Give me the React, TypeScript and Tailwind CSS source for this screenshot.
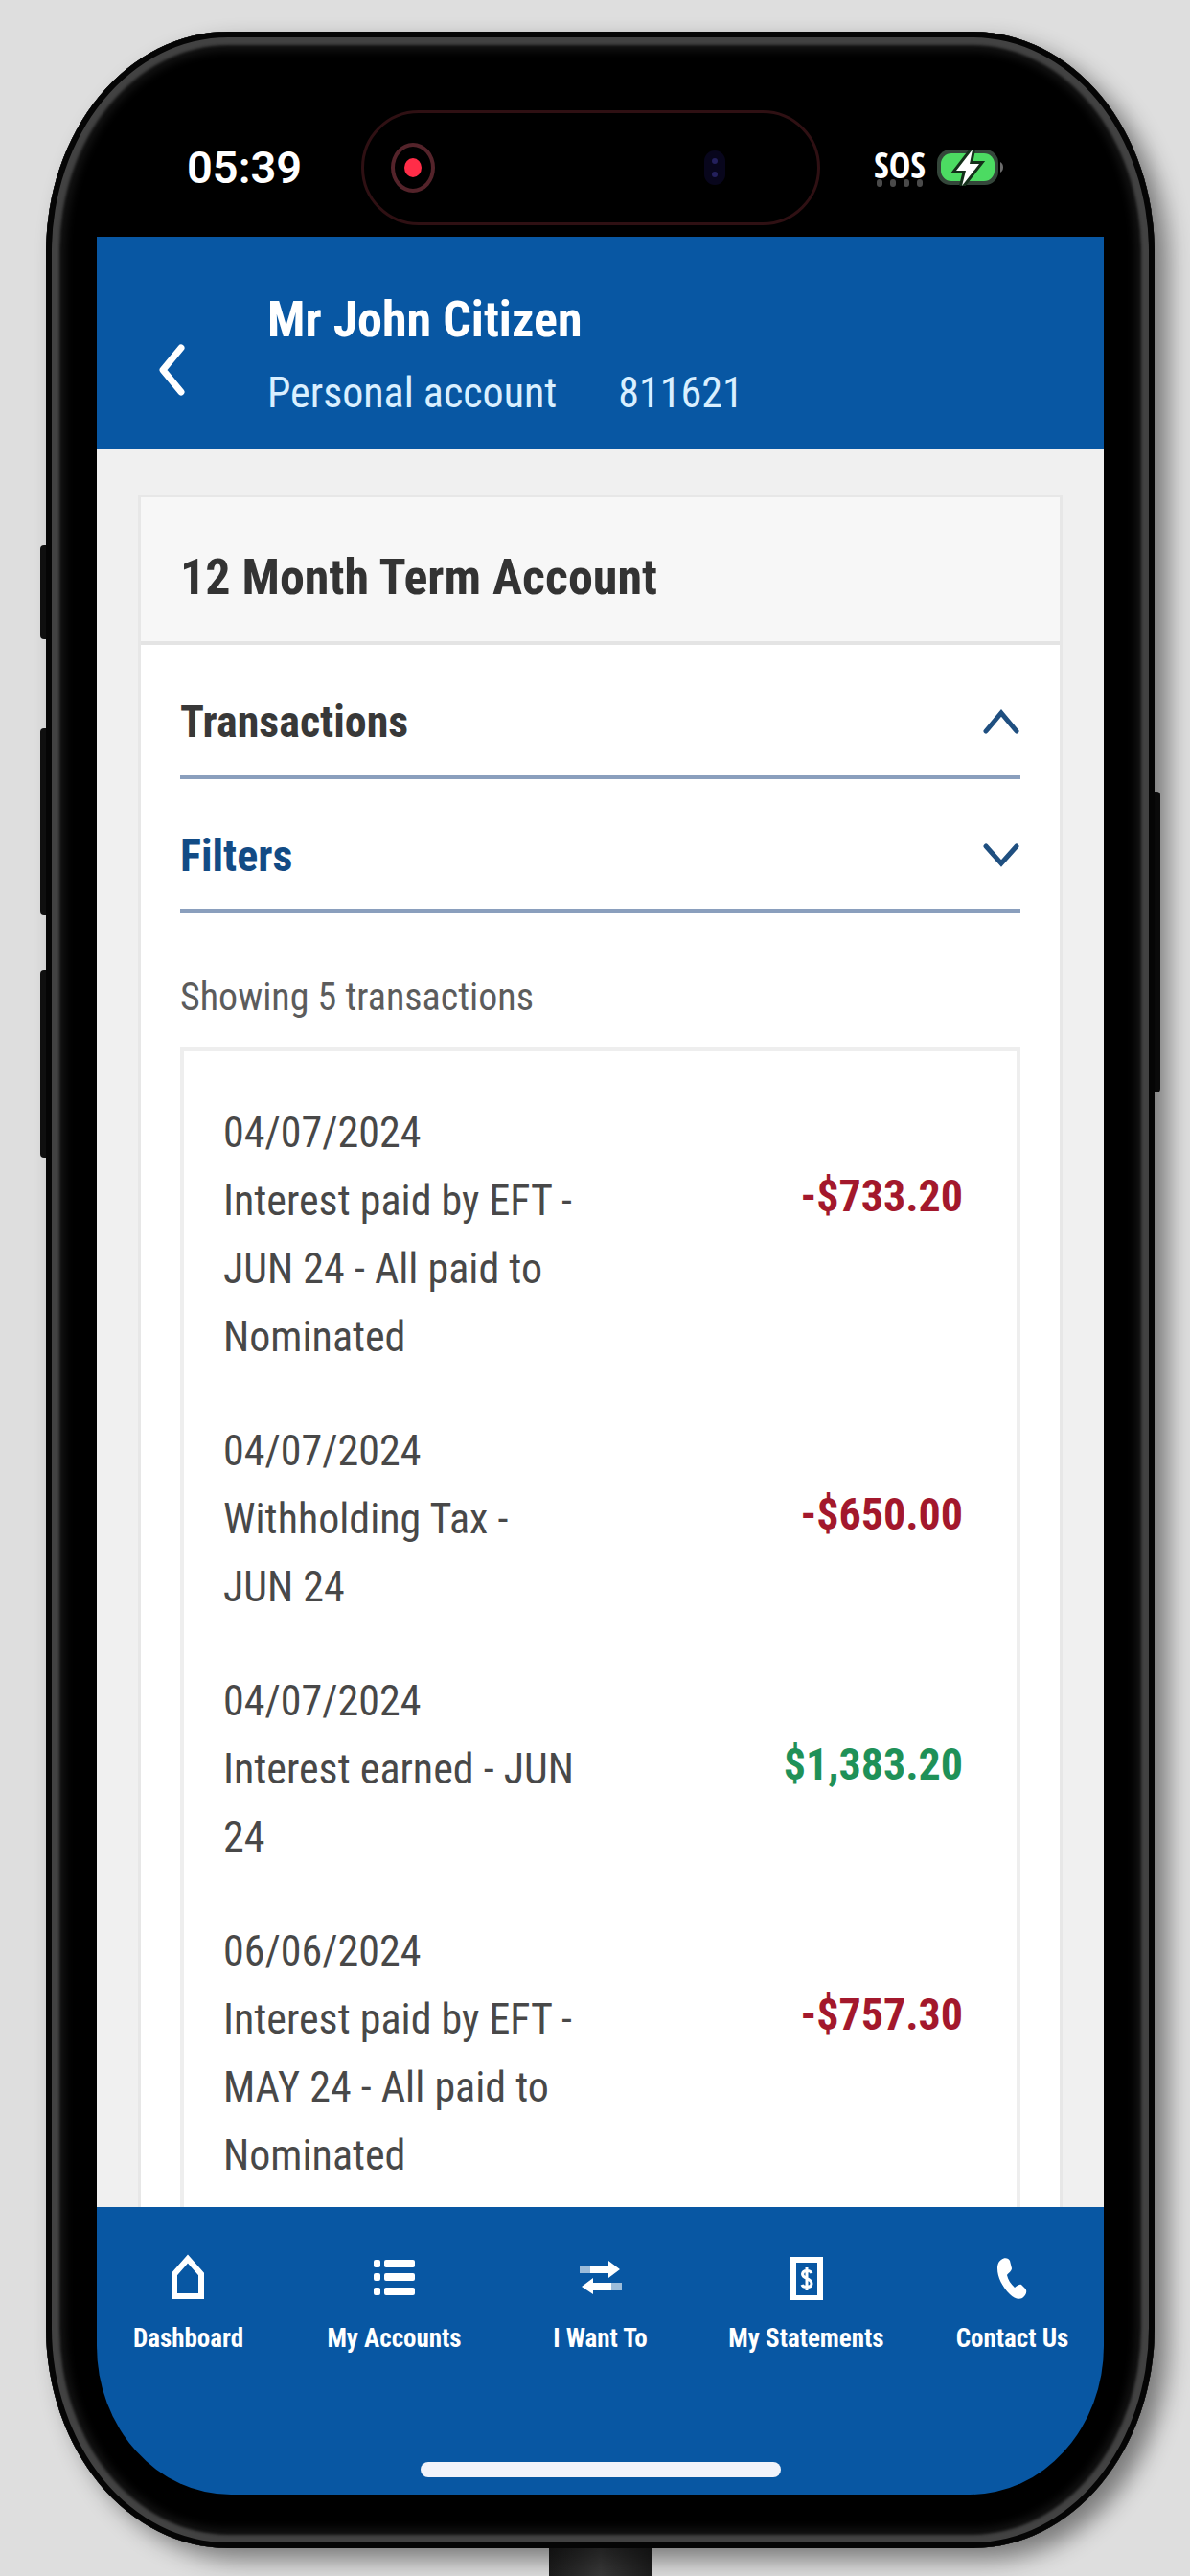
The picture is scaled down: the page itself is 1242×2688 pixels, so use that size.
import React, { useState } from 'react';

interface Transaction {
  date: string;
  description: string;
  amount: number;
}

interface NavItem {
  label: string;
  icon: React.ReactNode;
}

const transactions: Transaction[] = [
  { date: '04/07/2024', description: 'Interest paid by EFT - JUN 24 - All paid to Nominated', amount: -733.2 },
  { date: '04/07/2024', description: 'Withholding Tax - JUN 24', amount: -650 },
  { date: '04/07/2024', description: 'Interest earned - JUN 24', amount: 1383.2 },
  { date: '06/06/2024', description: 'Interest paid by EFT - MAY 24 - All paid to Nominated', amount: -757.3 },
];

const formatAmount = (value: number) =>
  (value < 0 ? '-$' : '$') + Math.abs(value).toLocaleString('en-AU', { minimumFractionDigits: 2 });

const navItems: NavItem[] = [
  {
    label: 'Dashboard',
    icon: <path d="M9 44V21L23 5L37 21V44Z" fill="none" stroke="currentColor" strokeWidth="6" />,
  },
  {
    label: 'My Accounts',
    icon: (
      <g fill="currentColor">
        <rect x="2" y="6" width="7" height="8" rx="2" />
        <rect x="13" y="6" width="32" height="8" rx="2" />
        <rect x="2" y="20" width="7" height="8" rx="2" />
        <rect x="13" y="20" width="32" height="8" rx="2" />
        <rect x="2" y="35" width="7" height="8" rx="2" />
        <rect x="13" y="35" width="32" height="8" rx="2" />
      </g>
    ),
  },
  {
    label: 'I Want To',
    icon: (
      <g fill="currentColor">
        <path d="M13 12H32V7L44 16L32 25V20H13Z" />
        <path d="M35 30H16V25L4 34L16 42V38H35Z" />
        <path d="M2 12H13V20H2ZM35 30H46V38H35Z" opacity="0.6" />
      </g>
    ),
  },
  {
    label: 'My Statements',
    icon: (
      <>
        <rect x="10" y="6" width="28" height="40" fill="none" stroke="currentColor" strokeWidth="6" />
        <path
          d="M29 20C28 17 20 16 19.500 21C19.500 26 29 25 29 31C28.500 36 20 35 19 32M24 14V38"
          fill="none"
          stroke="currentColor"
          strokeWidth="3"
        />
      </>
    ),
  },
  {
    label: 'Contact Us',
    icon: (
      <path
        d="M12 6C15 3 20 4 21 7L23 15C23 18 19 20 18 22C19 27 22 31 26 35C28 34 30 31 33 32L37 36C40 39 37 44 34 46C30 48 25 46 21 42C13 34 8 24 8 15C8 10 10 7 12 6Z"
        fill="currentColor"
      />
    ),
  },
];

const BatteryIcon = () => (
  <svg viewBox="0 0 70 38" className="h-[38px] w-[70px]" aria-hidden="true">
    <rect x="0" y="0" width="64" height="37" rx="14" fill="#34463a" />
    <rect x="4" y="4" width="56" height="29" rx="11" fill="#4cdb62" />
    <path d="M66 13C70 15 70 22 66 24Z" fill="#6b6b6b" />
    <path d="M37 0L20 22H30L26 38L44 15H34Z" fill="#fff" stroke="#14301a" strokeWidth="6" paintOrder="stroke" />
  </svg>
);

const StatusBar = () => (
  <div className="flex items-center pt-[82px] pr-[104px] pb-3 pl-[94px] text-white">
    <span className="font-['Roboto',sans-serif] text-[47px] leading-[60px] font-semibold">05:39</span>
    <div className="mr-14 ml-[62px] flex h-[120px] flex-1 items-center justify-between rounded-full border-[3px] border-[#2f1013] pr-24 pl-[28px]">
      <span className="flex h-[52px] w-[46px] items-center justify-center rounded-[50%] border-4 border-[#54232a]">
        <span className="h-5 w-[18px] rounded-[50%] bg-[#ff2d48]" />
      </span>
      <span className="flex flex-col items-center gap-2 rounded-full bg-[#08061c] px-2 py-2">
        <span className="size-1.5 rounded-full bg-[#24205c]" />
        <span className="size-1.5 rounded-full bg-[#24205c]" />
      </span>
    </div>
    <div className="flex flex-col items-center">
      <span className="font-['Open_Sans_Condensed','Roboto_Condensed',sans-serif] text-[38px] leading-8 font-bold">SOS</span>
      <span className="flex gap-2">
        <span className="h-2 w-1.5 rounded-full bg-[#4a4a4a]" />
        <span className="h-2 w-1.5 rounded-full bg-[#4a4a4a]" />
        <span className="h-2 w-1.5 rounded-full bg-[#4a4a4a]" />
        <span className="h-2 w-1.5 rounded-full bg-[#4a4a4a]" />
      </span>
    </div>
    <div className="ml-3">
      <BatteryIcon />
    </div>
  </div>
);

const AccountHeader = () => (
  <header className="flex items-center gap-[86px] bg-[#0857a3] pt-[57px] pr-10 pb-7 pl-16 text-white">
    <button type="button" aria-label="Back" className="mt-7">
      <svg viewBox="0 0 28 54" className="h-[54px] w-7" fill="none" stroke="currentColor" strokeWidth="7">
        <path d="M24 4L5 27L24 50" strokeLinecap="round" strokeLinejoin="round" />
      </svg>
    </button>
    <div>
      <h1 className="text-[52px] leading-[60px] font-bold">Mr John Citizen</h1>
      <p className="mt-4 flex gap-16 text-[44px] leading-[60px] text-[#d9efff]">
        <span>Personal account</span>
        <span>811621</span>
      </p>
    </div>
  </header>
);

interface SectionToggleProps {
  title: string;
  open: boolean;
  onToggle: () => void;
  className: string;
}

const SectionToggle: React.FC<SectionToggleProps> = ({ title, open, onToggle, className }) => (
  <button
    type="button"
    onClick={onToggle}
    aria-expanded={open}
    className={`flex w-full items-center justify-between border-b-4 border-[#8a9fbd] pt-[52px] pb-7 text-[46px] leading-[56px] font-bold ${className}`}
  >
    {title}
    <svg viewBox="0 0 40 26" className="h-[26px] w-10" fill="none" stroke="#1f4f80" strokeWidth="5" strokeLinecap="round">
      <path d={open ? 'M4 23L20 4L36 23' : 'M4 3L20 21L36 3'} />
    </svg>
  </button>
);

const TransactionRow: React.FC<{ item: Transaction }> = ({ item }) => (
  <li className="flex items-start justify-between leading-[71px]">
    <div className="w-[380px] text-[44px]">
      <p>{item.date}</p>
      <p>{item.description}</p>
    </div>
    <p className={`pt-[66px] text-[46px] font-bold ${item.amount < 0 ? 'text-[#a3182c]' : 'text-[#1f9158]'}`}>
      {formatAmount(item.amount)}
    </p>
  </li>
);

const BottomNav = () => (
  <nav className="flex flex-col items-center bg-[#0857a3] pt-[49px] pb-[18px] text-white">
    <ul className="-mx-3 grid grid-cols-5 self-stretch">
      {navItems.map((item) => (
        <li key={item.label}>
          <a href="#" className="flex flex-col items-center gap-5 text-[27px] leading-10 font-bold whitespace-nowrap">
            <svg viewBox="0 0 48 48" className="size-12" aria-hidden="true">
              {item.icon}
            </svg>
            {item.label}
          </a>
        </li>
      ))}
    </ul>
    <span className="mt-[109px] h-4 w-[376px] rounded-full bg-[#f1f3fa]" />
  </nav>
);

const App = () => {
  const [showTransactions, setShowTransactions] = useState(true);
  const [showFilters, setShowFilters] = useState(false);

  return (
    <main className="flex min-h-screen flex-col overflow-hidden bg-[#dedede] pt-[33px] pr-[37px] pl-12 font-['Roboto_Condensed','Lato',sans-serif]">
      <div className="relative">
        {/* hardware buttons */}
        <span className="absolute top-[536px] -left-1.5 h-[98px] w-4 rounded-l-sm bg-[#101010]" />
        <span className="absolute top-[727px] -left-1.5 h-[195px] w-4 rounded-l-sm bg-[#101010]" />
        <span className="absolute top-[979px] -left-1.5 h-[196px] w-4 rounded-l-sm bg-[#101010]" />
        <span className="absolute top-[793px] -right-1.5 h-[314px] w-4 rounded-r-sm bg-[#101010]" />

        <div className="relative rounded-[190px/230px] bg-black px-[53px] pb-14 shadow-[inset_0_0_0_6px_#050505,inset_0_0_3px_14px_#424242,inset_0_0_10px_20px_#141414,14px_12px_24px_rgba(0,0,0,0.45)]">
          <StatusBar />
          <div className="overflow-hidden rounded-b-[140px_155px]">
            <AccountHeader />
            <div className="bg-[#f0f0f0] px-[43px] pt-12 text-[#484848]">
              <section className="border-x-[3px] border-t-[3px] border-[#e7e7e7] bg-white">
                <h2 className="border-b-4 border-[#e4e4e4] bg-[#f7f7f7] px-[41px] pt-[54px] pb-9 text-[52px] leading-[60px] font-bold text-[#333]">
                  12 Month Term Account
                </h2>
                <div className="px-[41px]">
                  <SectionToggle
                    title="Transactions"
                    open={showTransactions}
                    onToggle={() => setShowTransactions(!showTransactions)}
                    className="text-[#383838]"
                  />
                  <SectionToggle
                    title="Filters"
                    open={showFilters}
                    onToggle={() => setShowFilters(!showFilters)}
                    className="text-[#124b85]"
                  />
                  {showTransactions && (
                    <>
                      <p className="mt-16 text-[40px] leading-[48px] text-[#5c5c5c]">Showing 5 transactions</p>
                      <ul className="mt-7 flex flex-col gap-12 border-x-4 border-t-4 border-[#eee] pt-[50px] pr-14 pb-[18px] pl-[41px]">
                        {transactions.map((item, i) => (
                          <TransactionRow key={i} item={item} />
                        ))}
                      </ul>
                    </>
                  )}
                </div>
              </section>
            </div>
            <BottomNav />
          </div>
        </div>
      </div>
      {/* charging cable */}
      <div className="flex flex-1 justify-center">
        <span className="min-h-6 w-[108px] bg-linear-to-r from-[#1c1c1c] via-[#383838] to-[#1c1c1c]" />
      </div>
    </main>
  );
};

export default App;
